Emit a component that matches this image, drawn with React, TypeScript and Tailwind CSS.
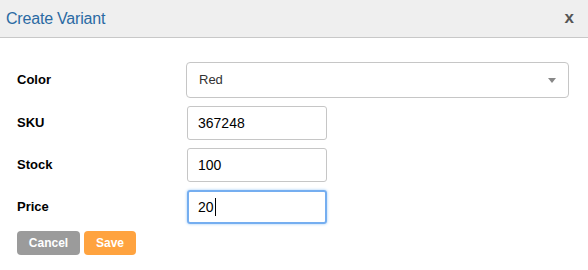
import { useState } from "react";

type RowProps = {
  label: string;
  children: React.ReactNode;
};

const Row = ({ label, children }: RowProps) => (
  <div className="flex items-center">
    <label className="w-[170px] shrink-0 text-[13px] font-bold text-black">{label}</label>
    {children}
  </div>
);

const App = () => {
  const [sku, setSku] = useState("367248");
  const [stock, setStock] = useState("100");

  return (
    <div className="w-[588px] h-[270px] bg-white font-['Liberation_Sans',Arial,sans-serif] overflow-hidden">
      {/* header */}
      <div className="flex h-[38px] items-center justify-between border-b border-[#c8c8c8] bg-[#efefef] pl-[6px] pr-[14px]">
        <h3 className="text-[16px] text-[#2a6aa3] tracking-[-0.2px]">Create Variant</h3>
        <button className="pb-[2px] text-[17px] font-bold text-[#555] leading-none">x</button>
      </div>

      <div className="pl-[17px] pt-6">
        <div className="flex flex-col gap-2">
          <Row label="Color">
            <div className="-ml-px flex h-[36px] w-[383px] items-center justify-between rounded-[4px] border border-[#c6c6c6] pl-[12px] pr-[12px] text-[13px] text-[#333]">
              <span>Red</span>
              <svg width="8" height="5" viewBox="0 0 8 5">
                <path d="M0 0H8L4 5Z" fill="#888" />
              </svg>
            </div>
          </Row>
          <Row label="SKU">
            <input
              value={sku}
              onChange={(e) => setSku(e.target.value)}
              className="h-[34px] w-[140px] rounded-[3px] border border-[#c6c6c6] px-[10px] text-[14px] text-black outline-none"
            />
          </Row>
          <Row label="Stock">
            <input
              value={stock}
              onChange={(e) => setStock(e.target.value)}
              className="h-[34px] w-[140px] rounded-[3px] border border-[#c6c6c6] px-[10px] text-[14px] text-black outline-none"
            />
          </Row>
          <Row label="Price">
            {/* focused field, caret drawn by hand */}
            <div className="flex h-[34px] w-[140px] items-center rounded-[3px] border-2 border-[#75aef0] px-[9px] text-[14px] text-black shadow-[0_0_3px_#9cc8f5]">
              <span>20</span>
              <span className="ml-[1px] h-[18px] w-px bg-black" />
            </div>
          </Row>
        </div>

        <div className="mt-[7px] flex gap-1">
          <button className="h-[24px] w-[63px] rounded-[4px] bg-[#9b9b9b] text-[12px] font-bold text-white">
            Cancel
          </button>
          <button className="h-[24px] w-[52px] rounded-[4px] bg-[#ffa33f] text-[12px] font-bold text-white">
            Save
          </button>
        </div>
      </div>
    </div>
  );
};

export default App;
